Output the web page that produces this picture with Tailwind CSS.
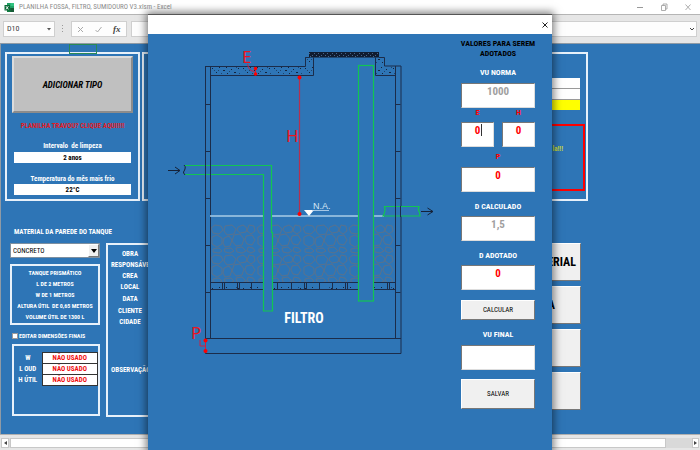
<!DOCTYPE html>
<html lang="pt-BR">
<head>
<meta charset="utf-8">
<meta name="viewport" content="width=device-width, initial-scale=1">
<title>PLANILHA FOSSA, FILTRO, SUMIDOURO V3.xlsm - Excel</title>
<script src="https://cdn.jsdelivr.net/npm/@tailwindcss/browser@4"></script>
</head>
<body class="bg-[#2e75b6] font-['Roboto_Condensed',Roboto,sans-serif]">
<div class="relative flex min-h-screen flex-col overflow-hidden">

  <!-- Title bar -->
  <header class="flex h-[14px] items-center gap-1 bg-white pl-1 pr-2 text-[#8c8c8c]">
    <svg class="h-[11px] w-[11px]" viewBox="0 0 11 11" aria-hidden="true">
      <path d="M3 1h7v9H3z" fill="#21a366"/><path d="M6.500 1H10v3H6.500z" fill="#33c481"/><path d="M3 6h7v4H3z" fill="#107c41"/><path d="M6.500 6H10v4H6.500z" fill="#185c37"/>
      <rect x="0.500" y="3" width="5.500" height="5.500" fill="#0b6b38"/><path d="M2 4.200l2.400 3.200M4.400 4.200L2 7.400" stroke="#fff" stroke-width=".9"/>
    </svg>
    <h1 class="flex-1 whitespace-nowrap text-[7px] leading-[10px]">PLANILHA FOSSA, FILTRO, SUMIDOURO V3.xlsm - Excel</h1>
    <div class="flex items-center gap-4">
      <button aria-label="Minimizar"><svg class="h-2 w-2" viewBox="0 0 8 8" fill="none" stroke="#999"><path d="M1 4.500h6"/></svg></button>
      <button aria-label="Restaurar"><svg class="h-2 w-2" viewBox="0 0 8 8" fill="none" stroke="#999" stroke-width=".8"><path d="M1.500 2.500h4v5h-4zM3 2.500v-1.500h4v5H5.500"/></svg></button>
      <button aria-label="Fechar"><svg class="h-2 w-2" viewBox="0 0 8 8" fill="none" stroke="#999" stroke-width=".8"><path d="M1.500 1.500l5 5.500M6.500 1.500l-5 5.500"/></svg></button>
    </div>
  </header>

  <!-- Formula bar -->
  <div class="flex h-[29px] items-center border-t border-[#b5b5b5] bg-[#e6e6e6] px-[3px]">
    <div class="flex h-4 w-[52px] items-center justify-between border border-[#cfcfcf] bg-[#fdfdfd] px-[3px]">
      <input aria-label="Caixa de nome" value="D10" class="w-8 bg-transparent text-[8px] leading-[10px] text-[#444] outline-none">
      <svg class="h-1 w-1" viewBox="0 0 4 4" aria-hidden="true"><path d="M0 1h4L2 3.500z" fill="#555"/></svg>
    </div>
    <svg class="mx-[7px] h-2 w-[2px]" viewBox="0 0 2 8" aria-hidden="true"><path d="M0 0h1v1H0zM0 3h1v1H0zM0 6h1v1H0z" fill="#999"/></svg>
    <div class="flex h-4 w-14 items-center justify-around border border-[#cfcfcf] bg-[#fdfdfd]">
      <button aria-label="Cancelar"><svg class="h-[7px] w-[7px]" viewBox="0 0 7 7" fill="none" stroke="#aaa"><path d="M1 1l5 5M6 1L1 6"/></svg></button>
      <button aria-label="Inserir"><svg class="h-[7px] w-[7px]" viewBox="0 0 7 7" fill="none" stroke="#aaa"><path d="M.5 4l2 2L6.500 1"/></svg></button>
      <button aria-label="Inserir função" class="font-['Liberation_Serif',serif] text-[9px] font-bold italic leading-[10px] text-[#444]">fx</button>
    </div>
    <div class="ml-1 flex h-4 flex-1 items-center border border-[#cfcfcf] bg-[#fdfdfd] pr-[2px]">
      <input aria-label="Barra de fórmulas" class="min-w-0 flex-1 bg-transparent text-[8px] outline-none">
      <svg class="h-1 w-1" viewBox="0 0 4 4" fill="none" stroke="#444" aria-hidden="true"><path d="M0 1l2 2 2-2"/></svg>
    </div>
  </div>

  <!-- Worksheet -->
  <main class="relative flex-1 border-l border-t border-[#8f9aa5] bg-[#2e75b6] pb-[17px] pl-1 pt-2 font-bold text-white">
    <div class="absolute left-[68px] top-0 h-[10px] w-7 border border-[#2a8a55]"></div>

    <div class="flex gap-[2px]">
      <section class="h-[149px] w-[135px] border-2 border-[#e8f1fa] px-[5px] pt-[2px] text-center">
        <button class="h-[57px] w-full border-2 border-b-[#8c8c8c] border-l-[#dcdcdc] border-r-[#8c8c8c] border-t-[#dcdcdc] bg-[#c0c0c0] text-[9px] italic leading-3 text-black">ADICIONAR TIPO</button>
        <p class="mt-2 whitespace-nowrap text-[7px] leading-[10px] text-[#e01b24]">PLANILHA TRAVOU? CLIQUE AQUI!!!!</p>
        <label for="limpeza" class="mt-[10px] block text-[7px] leading-[10px]">Intervalo&nbsp; de limpeza</label>
        <input id="limpeza" value="2 anos" class="mx-auto mt-px block h-[11px] w-[117px] bg-white text-center text-[7px] leading-[10px] text-black">
        <label for="temp" class="mt-[11px] block text-[7px] leading-[10px]">Temperatura do mês mais frio</label>
        <input id="temp" value="22°C" class="mx-auto block h-[11px] w-[117px] bg-white text-center text-[7px] leading-[10px] text-black">
      </section>

      <section class="flex h-[149px] w-[446px] flex-col items-end border-2 border-[#e8f1fa] pt-6">
        <div class="mr-[6px] flex w-[100px] flex-col gap-px bg-[#9a9a9a]">
          <div class="h-[10px] bg-white"></div><div class="h-[10px] bg-white"></div><div class="h-[10px] bg-[#ffff00]"></div>
        </div>
        <p class="mr-px mt-[14px] h-[67px] w-[120px] border-2 border-[#ff0000] pr-5 pt-[18px] text-right text-[7px] leading-[10px] text-[#c5d936]">la!!!</p>
      </section>
    </div>

    <div class="flex pl-[5px] pt-[26px] text-[7px] leading-[10px]">
      <div class="w-[90px]">
        <label for="material" class="block whitespace-nowrap pl-1">MATERIAL DA PAREDE DO TANQUE</label>
        <div class="relative mt-[6px]">
          <select id="material" class="block h-[15px] w-full appearance-none border border-[#7d8fa0] bg-white pl-[2px] font-normal text-black"><option>CONCRETO</option></select>
          <span class="pointer-events-none absolute right-px top-px flex h-[13px] w-[11px] items-center justify-center border border-b-[#777] border-l-white border-r-[#777] border-t-white bg-[#f0f0f0]">
            <svg class="h-1 w-[6px]" viewBox="0 0 6 4" aria-hidden="true"><path d="M0 0h6L3 4z"/></svg>
          </span>
        </div>
        <div class="mt-[6px] flex h-[61px] flex-col gap-px whitespace-nowrap border-2 border-[#e8f1fa] pt-[2px] text-center text-[6px] leading-[10px]">
          <p>TANQUE PRISMÁTICO</p><p>L DE 2 METROS</p><p>W DE 1 METROS</p><p>ALTURA ÚTIL&nbsp; DE 0,65 METROS</p><p>VOLUME ÚTIL DE 1300 L</p>
        </div>
        <label class="mt-[6px] flex items-center gap-px whitespace-nowrap pl-[2px] text-[6px]">
          <input type="checkbox" class="h-[6px] w-[6px] shrink-0 appearance-none border border-[#9a9a9a] bg-white">EDITAR DIMENSÕES FINAIS
        </label>
        <div class="ml-[2px] mt-[3px] h-[72px] border-2 border-[#e8f1fa] pt-[6px]">
          <table class="w-[84px] border-collapse text-center">
            <tbody>
              <tr><th scope="row" class="w-[28px] whitespace-nowrap p-0">W</th><td class="border border-[#333] bg-white p-0 text-[#f01010]">NÃO USADO</td></tr>
              <tr><th scope="row" class="whitespace-nowrap p-0">L OUD</th><td class="border border-[#333] bg-white p-0 text-[#f01010]">NÃO USADO</td></tr>
              <tr><th scope="row" class="whitespace-nowrap p-0">H ÚTIL</th><td class="border border-[#333] bg-white p-0 text-[#f01010]">NÃO USADO</td></tr>
            </tbody>
          </table>
        </div>
      </div>

      <section class="ml-[6px] mt-4 flex h-[174px] w-[340px] flex-col items-start border-2 border-[#e8f1fa] pl-[3px] pt-1">
        <div class="flex w-[38px] flex-col items-center gap-px whitespace-nowrap">
          <span>OBRA</span><span class="self-start">RESPONSÁVEL</span><span>CREA</span><span>LOCAL</span><span class="mt-px">DATA</span><span class="mt-px">CLIENTE</span><span>CIDADE</span><span class="mt-[37px] self-start">OBSERVAÇÃO</span>
        </div>
      </section>

      <div class="ml-[35px] mt-4 flex w-[100px] flex-col gap-[5px] text-[12px] leading-4 text-black">
        <button class="h-[38px] border border-b-[#777] border-l-white border-r-[#777] border-t-white bg-[#f0f0f0] pr-1 text-right">MATERIAL</button>
        <button class="h-[38px] border border-b-[#777] border-l-white border-r-[#777] border-t-white bg-[#f0f0f0] pr-[25px] text-right">A</button>
        <button aria-label="Ação 3" class="h-[38px] border border-b-[#777] border-l-white border-r-[#777] border-t-white bg-[#f0f0f0]"></button>
        <button aria-label="Ação 4" class="h-[38px] border border-b-[#777] border-l-white border-r-[#777] border-t-white bg-[#f0f0f0]"></button>
      </div>
    </div>
  </main>

  <!-- Horizontal scroll bar -->
  <footer class="flex h-[17px] items-center border-b border-t border-b-[#8a8a8a] border-t-[#b0b0b0] bg-[#e6e6e6] px-px">
    <button aria-label="Rolar para a esquerda" class="flex h-[10px] w-2 items-center justify-center border border-[#c8c8c8] bg-white"><svg class="h-1 w-[3px]" viewBox="0 0 3 4"><path d="M3 0v4L0 2z" fill="#444"/></svg></button>
    <div class="flex h-[10px] flex-1 bg-[#d9d9d9] pr-[26px]"><div class="ml-px flex-1 border border-[#c8c8c8] bg-white"></div></div>
    <button aria-label="Rolar para a direita" class="flex h-[10px] w-[7px] items-center justify-center border border-[#c8c8c8] bg-white"><svg class="h-1 w-[3px]" viewBox="0 0 3 4"><path d="M0 0v4l3-2z" fill="#444"/></svg></button>
  </footer>

  <!-- Form window -->
  <div role="dialog" aria-label="Filtro" class="absolute inset-x-0 bottom-0 top-[14px] mx-auto flex w-[404px] flex-col border-t border-[#555] bg-[#2e75b6] shadow-[0_0_8px_2px_rgba(0,0,0,0.5)]">
    <div class="flex h-[19px] items-center justify-end bg-white pr-[3px]">
      <button aria-label="Fechar janela"><svg class="h-2 w-2" viewBox="0 0 8 8" fill="none" stroke="#222"><path d="M1.500 1.500l5 5M6.500 1.500l-5 5"/></svg></button>
    </div>
    <div class="flex flex-1 justify-between pl-[12px] pr-[7px]">
      <svg class="mt-[6px] h-[330px] w-[280px]" viewBox="160 40 280 330" fill="none" role="img" aria-label="Corte do filtro">
        <defs>
          <pattern id="stones" width="46" height="30" x="210" y="224" patternUnits="userSpaceOnUse">
            <g stroke="#5d7187" stroke-width=".9">
              <path d="M1 4l4-3 6 1 2 4-4 4-6-1zM15 2l7-1 4 4-2 5-7 1-3-4zM28 3l5-2 4 3-1 4-6 1-3-3zM39 1l5 1 1 5-4 3-4-3zM2 13l5-2 5 3v6l-5 3-5-3zM14 14l5-2 3 4-2 6-5 1-2-4zM24 11l6-1 4 5-2 6-6 1-4-5zM36 12l6-1 3 5-3 5-5-1-2-4zM3 25l6-1 3 3-3 2-6-1zM14 25l7-1 3 3-4 2-5-1zM26 24l6-1 4 4-4 2-5-1zM38 23l5 1 2 3-4 2-4-2z"/>
            </g>
          </pattern>
          <pattern id="grain" width="31" height="11" x="210" y="65" patternUnits="userSpaceOnUse">
            <path d="M2 3h1v1H2zM6 7h1v1H6zM9 2h1v1H9zM13 5h2v1h-2zM17 8h1v1h-1zM16 2h1v1h-1zM21 4h1v1h-1zM24 7h2v1h-2zM28 3h1v1h-1z" fill="#14243c"/>
            <path d="M4 5h1v1H4zM11 8h1v1h-1zM19 6h1v1h-1zM26 2h1v1h-1zM8 5h1v1H8zM29 8h1v1h-1z" fill="#1f456e"/>
          </pattern>
          <pattern id="dense" width="9" height="5" x="309" y="52" patternUnits="userSpaceOnUse">
            <path d="M0 1h1v1H0zM3 3h1v1H3zM5 1h1v1H5zM7 3h1v1H7zM1 4h1v1H1z" fill="#45648a"/>
          </pattern>
        </defs>

        <rect x="211" y="224" width="184" height="58" fill="url(#stones)"/>
        <path d="M210.500 66.500h95v-9.500h8v18.500h-103zM375.500 57h9v9h11v9.500h-20z" fill="url(#grain)"/>
        <rect x="211" y="283" width="184" height="7" fill="url(#grain)"/>

        <g stroke="#1b2c4a">
          <path d="M205.500 66.500h100V57.500h4M210.500 75.500h103V57.500M375.500 57.500V75.500h20M379 57.500h5.500v8.500h16.500"/>
          <path d="M205.500 66v287.500h195.500V66M210.500 66v272.500M395.500 66v272.500M205.500 338.500h195.500"/>
          <path d="M205.500 104.500h5M205.500 151.500h5M205.500 198.500h5M205.500 245.500h5M205.500 292.500h5M395.500 104.500h5M395.500 151.500h5M395.500 198.500h5M395.500 245.500h5M395.500 292.500h5"/>
          <path d="M210.500 282.500h185M210.500 289.500h185M222.500 283v6M224.500 283v6M237.500 283v6M239.500 283v6M251.500 283v6M277.500 283v6M291.500 283v6M304.500 283v6M306.500 283v6M319.500 283v6M332.500 283v6M345.500 283v6M347.500 283v6M387.500 283v6M389.500 283v6"/>
        </g>
        <rect x="309" y="52" width="70" height="5.500" fill="#101c30"/><rect x="309" y="52" width="70" height="5" fill="url(#dense)"/>

        <path d="M210 216h174" stroke="#a9cce6" stroke-width="1.500"/>
        <path d="M304 210h10l-5 6z" fill="#fff"/>
        <text x="313" y="209" font-size="9" fill="#d5e6f5" class="font-['Liberation_Sans',sans-serif]">N.A.</text>
        <path d="M312 210.500h17" stroke="#c5dcf0" stroke-width=".8"/>

        <g stroke="#12c552" stroke-width="1.200" fill="#2e75b6">
          <path d="M184.500 165.500h87v67h1v78.500h-9V174.500h-79"/>
          <rect x="358.500" y="65.500" width="15" height="235.500"/>
          <path d="M384.500 206.500h34.500q-1.500 3 .5 6l.5 3.500h-37q3-5 1.500-9.500z"/>
        </g>
        <path d="M205.500 164v12M210.500 164v12M395.500 206v11M400.500 206v11" stroke="#1b2c4a"/>
        <path d="M184 165q2 1.500 1 4t-1.500 3 1.500 3M168 170.500h12M175 167l5 3.500-5 3.500M421 211.500h12M427.500 208l5.500 3.500-5.500 3.500" stroke="#152238"/>

        <path d="M299.500 77v138" stroke="#b5304f" stroke-width="1.200"/>
        <path d="M255.500 67v8M247.500 64q1 7 7 7.500M200 340v6h5.500M205.500 340v12" stroke="#d02040"/>
        <g fill="#f00"><circle cx="299.500" cy="77.500" r="2"/><circle cx="299.500" cy="214" r="2"/><circle cx="255.500" cy="68.500" r="1.800"/><circle cx="255.500" cy="74" r="1.800"/><circle cx="205.500" cy="340.500" r="2"/><circle cx="205.500" cy="351" r="2"/></g>
        <g fill="#ea1420" font-size="17" class="font-['Noto_Sans',sans-serif]"><text x="242" y="63">E</text><text x="286" y="142">H</text><text x="191" y="339">P</text></g>
        <text x="304" y="323" text-anchor="middle" font-size="14" font-weight="700" fill="#fff">FILTRO</text>
      </svg>

      <form class="w-[94px] shrink-0 pt-[5px] text-center text-[8px] font-bold leading-[10px] text-white" onsubmit="return false">
        <h2 class="text-black">VALORES PARA SEREM<br>ADOTADOS</h2>
        <div class="px-[10px]">
          <label for="vun" class="mt-[9px] block">VU NORMA</label>
          <input id="vun" value="1000" class="mt-[5px] block h-[25px] w-full border border-b-[#ddd] border-l-[#777] border-r-[#ddd] border-t-[#777] bg-white pb-2 text-center text-[11px] leading-[14px] text-[#a0a0a0] outline-none">
          <div class="flex gap-2">
            <div class="relative flex-1 text-[#f00]"><label for="e" class="block">E</label><input id="e" value="0" class="mt-1 block h-[25px] w-full border border-b-[#ddd] border-l-[#777] border-r-[#ddd] border-t-[#777] bg-white pb-2 text-center text-[11px] leading-[14px] outline-none"><span class="absolute left-5 top-4 h-3 w-px bg-[#333]"></span></div>
            <div class="flex-1 text-[#f00]"><label for="h" class="block">H</label><input id="h" value="0" class="mt-1 block h-[25px] w-full border border-b-[#ddd] border-l-[#777] border-r-[#ddd] border-t-[#777] bg-white pb-2 text-center text-[11px] leading-[14px] outline-none"></div>
          </div>
          <label for="p" class="mt-[5px] block text-[#f00]">P</label>
          <input id="p" value="0" class="mt-[5px] block h-[25px] w-full border border-b-[#ddd] border-l-[#777] border-r-[#ddd] border-t-[#777] bg-white pb-2 text-center text-[11px] leading-[14px] text-[#f00] outline-none">
          <label for="dc" class="mt-[10px] block">D CALCULADO</label>
          <input id="dc" value="1,5" class="mt-1 block h-[25px] w-full border border-b-[#ddd] border-l-[#777] border-r-[#ddd] border-t-[#777] bg-white pb-2 text-center text-[11px] leading-[14px] text-[#a0a0a0] outline-none">
          <label for="da" class="mt-[10px] block">D ADOTADO</label>
          <input id="da" value="0" class="mt-1 block h-[25px] w-full border border-b-[#ddd] border-l-[#777] border-r-[#ddd] border-t-[#777] bg-white pb-2 text-center text-[11px] leading-[14px] text-[#f00] outline-none">
          <button class="mt-[10px] block h-5 w-full border border-b-[#777] border-l-white border-r-[#777] border-t-white bg-[#f0f0f0] text-[7px] font-normal text-black">CALCULAR</button>
          <label for="vf" class="mt-[10px] block">VU FINAL</label>
          <input id="vf" class="mt-[5px] block h-[25px] w-full border border-b-[#ddd] border-l-[#777] border-r-[#ddd] border-t-[#777] bg-white pb-2 text-center text-[11px] leading-[14px] text-black outline-none">
          <button class="mt-[9px] block h-[30px] w-full border border-b-[#777] border-l-white border-r-[#777] border-t-white bg-[#f0f0f0] text-[7px] font-normal text-black">SALVAR</button>
        </div>
      </form>
    </div>
  </div>
</div>
</body>
</html>
